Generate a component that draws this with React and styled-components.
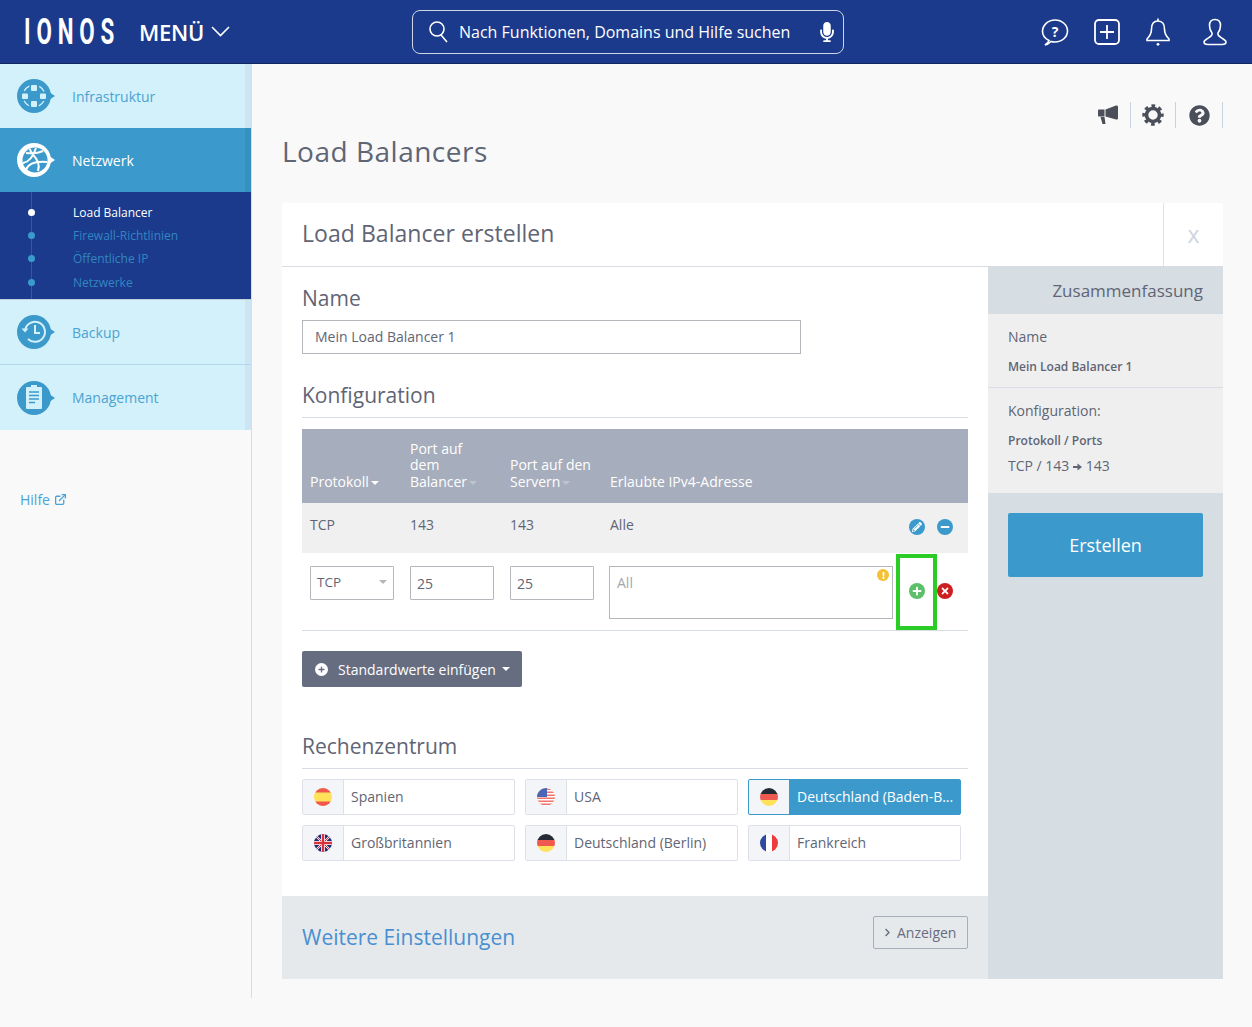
import styled, { createGlobalStyle, css } from 'styled-components'
import { FaQuestionCircle, FaPencilAlt, FaMinus, FaPlus, FaTimes, FaExclamation, FaMicrophone, FaChevronRight } from 'react-icons/fa'
import { FiExternalLink } from 'react-icons/fi'

const GlobalStyle = createGlobalStyle`
  * { box-sizing: border-box; }
  html, body { margin: 0; padding: 0; background: #f9f9f9; }
  body { font-family: "Open Sans", "Liberation Sans", sans-serif; font-size: 14px; color: #5f6575; }
`

const SummaryArrow = () => (
  <svg width="9" height="8" viewBox="0 0 10 8"><path d="M0 3h5V0l5 4-5 4V5H0z" fill="#5f6575" /></svg>
)

const Caret = styled.span`
  display: inline-block;
  margin-left: ${p => p.$gap ?? 3}px;
  vertical-align: middle;
  border-left: 4px solid transparent;
  border-right: 4px solid transparent;
  border-top: 4px solid ${p => p.$color || '#fff'};
`

/* ---------- icons ---------- */

const NavIcon = ({ active, children }) => {
  const bg = active ? '#fff' : '#3b9acb'
  return (
    <svg width="38" height="36" viewBox="0 0 38 36">
      <circle cx="17" cy="18" r="17" fill={bg} />
      <path d="M32 14l6 4-6 4z" fill={bg} />
      {children}
    </svg>
  )
}

const InfraGlyph = () => (
  <g fill="#d3f1fa">
    <circle cx="17" cy="18" r="11" fill="none" stroke="#d3f1fa" strokeWidth="1.3" strokeDasharray="7 10.28" strokeDashoffset="-5.14" />
    <rect x="14" y="7" width="6" height="6" rx="1" />
    <rect x="14" y="23" width="6" height="6" rx="1" />
    <rect x="5" y="15.500" width="6" height="5.500" rx="1" />
    <rect x="23" y="15.500" width="6" height="5.500" rx="1" />
  </g>
)

const GlobeGlyph = () => (
  <g>
    <circle cx="18" cy="18" r="12.500" fill="#3b9acb" />
    <g fill="none" stroke="#fff" strokeWidth="2">
      <path d="M6 21c6-1 10-6 13-15M9 28c2-6 8-9 21-8M13 7c0 4 5 6 8 13 1 3 1 6 0 9M26 9c-4 2-9 3-17 2" />
    </g>
  </g>
)

const ClockGlyph = () => (
  <g fill="none" stroke="#d3f1fa" strokeWidth="2">
    <path d="M8 17a10 10 0 1 1 3 8" />
    <path d="M4.500 14.500l3.500 4 3.500-4z" fill="#d3f1fa" stroke="none" />
    <path d="M18 11v8h5" />
  </g>
)

const ClipboardGlyph = () => (
  <g>
    <rect x="9" y="7" width="16" height="22" rx="1" fill="#d3f1fa" />
    <rect x="14" y="5" width="6" height="3" fill="#d3f1fa" />
    <path d="M12 12h10M12 15.500h10M12 19h10M12 22.500h6" stroke="#3b9acb" strokeWidth="1.400" />
  </g>
)

const SearchIcon = () => (
  <svg width="22" height="24" viewBox="0 0 22 24" fill="none" stroke="#fff" strokeWidth="1.600">
    <circle cx="9" cy="9" r="7" />
    <path d="M13 15l6 7" />
  </svg>
)

const ChatIcon = () => (
  <svg width="28" height="28" viewBox="0 0 28 28" fill="none" stroke="#fff" strokeWidth="1.600">
    <path d="M8 22.500C4 20.500 1.500 17.500 1.500 13.500 1.500 7 7 2 14 2S26.500 7 26.500 13 21 24 14 24c-1.500 0-2.500 0-4-.5-1 1-3 3-6 3.500 2-1.500 3.500-3 4-4.500z" />
    <text x="14" y="18.500" textAnchor="middle" fontSize="14" fontWeight="700" fill="#fff" stroke="none" fontFamily="Open Sans">?</text>
  </svg>
)

const PlusBoxIcon = () => (
  <svg width="26" height="26" viewBox="0 0 26 26" fill="none" stroke="#fff" strokeWidth="1.800">
    <rect x="1" y="1" width="24" height="24" rx="4" />
    <path d="M13 6v14M6 13h14" />
  </svg>
)

const BellIcon = () => (
  <svg width="26" height="28" viewBox="0 0 26 28" fill="none" stroke="#fff" strokeWidth="1.600">
    <path d="M13 3c-4.500 0-6.500 3.500-6.500 8 0 5-2 7.500-4.500 10v1.500h22V21c-2.500-2.500-4.500-5-4.500-10 0-4.500-2-8-6.500-8z" />
    <path d="M13 .5v2.500" />
    <circle cx="13" cy="26.300" r="1.400" fill="#fff" stroke="none" />
  </svg>
)

const UserIcon = () => (
  <svg width="24" height="28" viewBox="0 0 24 28" fill="none" stroke="#fff" strokeWidth="1.600">
    <path d="M12 1.500c-3.500 0-5.500 2.500-5.500 6 0 3 1 5.500 2.500 7.500 1 2.500-1.500 3.500-4.500 5.500-2.500 1.500-3.500 2.500-3.500 3.500 0 1.500 1.500 2.500 4 2.500h14c2.500 0 4-1 4-2.500 0-1-1-2-3.500-3.500-3-2-5.500-3-4.500-5.500 1.500-2 2.500-4.500 2.500-7.500 0-3.500-2-6-5.500-6z" />
  </svg>
)

const MegaphoneIcon = () => (
  <svg width="20" height="20" viewBox="0 0 20 20" fill="#4a4f5a">
    <path d="M0 5.500c0-.5.500-1 1-1h5.500v7H1c-.5 0-1-.5-1-1z" />
    <path d="M7.500 4.500L18 .5c1-.3 2 .3 2 1.300v11.400c0 1-1 1.600-2 1.300L7.500 11.500z" />
    <path d="M2.500 12h4l1 7H4.500z" />
  </svg>
)

const GearIcon = () => (
  <svg width="22" height="22" viewBox="0 0 22 22" fill="none" stroke="#4a4f5a">
    <circle cx="11" cy="11" r="6.500" strokeWidth="3.600" />
    <circle cx="11" cy="11" r="9" strokeWidth="3.400" strokeDasharray="3.600 3.469" strokeDashoffset="1.800" />
  </svg>
)

const Flag = ({ children }) => (
  <svg width="18" height="18" viewBox="0 0 18 18">
    <defs>
      <clipPath id="flag-circle"><circle cx="9" cy="9" r="9" /></clipPath>
    </defs>
    <g clipPath="url(#flag-circle)">{children}</g>
  </svg>
)

const Spain = () => (
  <Flag>
    <rect width="18" height="18" fill="#ffe15a" />
    <rect width="18" height="4.500" fill="#f0584f" />
    <rect y="13.500" width="18" height="4.500" fill="#f0584f" />
  </Flag>
)

const Germany = () => (
  <Flag>
    <rect width="18" height="6" fill="#252b36" />
    <rect y="6" width="18" height="6" fill="#ee5a50" />
    <rect y="12" width="18" height="6" fill="#ffe15a" />
  </Flag>
)

const France = () => (
  <Flag>
    <rect width="6" height="18" fill="#2e4a9e" />
    <rect x="6" width="6" height="18" fill="#fff" />
    <rect x="12" width="6" height="18" fill="#ee3b3b" />
  </Flag>
)

const Usa = () => (
  <Flag>
    <rect width="18" height="18" fill="#fff" />
    {[0, 3, 6, 9, 12, 15].map(y => <rect key={y} y={y + 0.5} width="18" height="1.500" fill="#f0736c" />)}
    <rect width="10" height="9" fill="#4a66b5" />
  </Flag>
)

const Britain = () => (
  <Flag>
    <rect width="18" height="18" fill="#1f2f78" />
    <path d="M0 0l18 18M18 0L0 18" stroke="#fff" strokeWidth="2" />
    <path d="M0 0l18 18M18 0L0 18" stroke="#d8303c" strokeWidth="1" />
    <path d="M9 0v18M0 9h18" stroke="#fff" strokeWidth="4" />
    <path d="M9 0v18M0 9h18" stroke="#d8303c" strokeWidth="2.500" />
  </Flag>
)

/* ---------- header ---------- */

const Header = styled.header`
  height: 64px;
  background: #1b3a8c;
  border-bottom: 1px solid #12275f;
  display: flex;
  align-items: center;
  color: #fff;
  padding-left: 24px;
  padding-right: 25px;
`

const Logo = styled.div`
  width: 91px;
  font-family: "Roboto", sans-serif;
  font-size: 36px;
  font-weight: 700;
  line-height: 1;
  letter-spacing: 9.500px;
  white-space: nowrap;
  transform: scaleX(0.62);
  transform-origin: left center;
`

const Menu = styled.div`
  margin-left: 24px;
  width: 91px;
  display: flex;
  align-items: center;
  gap: 7px;
  font-size: 22px;
  font-weight: 600;
  letter-spacing: -0.3px;
`

const SearchBox = styled.div`
  margin-left: 182px;
  width: 432px;
  height: 44px;
  border: 1px solid #cfd6e6;
  border-radius: 8px;
  display: flex;
  align-items: center;
  padding: 0 6px 0 15px;
  gap: 9px;
  font-size: 16px;
  span { flex: 1; white-space: nowrap; }
`

const HeaderIcons = styled.div`
  margin-left: auto;
  display: flex;
  align-items: center;
  gap: 25px;
  & > :last-child { margin-left: 7px; }
`

/* ---------- sidebar ---------- */

const Layout = styled.div`
  display: flex;
  align-items: flex-start;
  min-height: 963px;
`

const Sidebar = styled.aside`
  width: 252px;
  flex: none;
  height: 934px;
  border-right: 1px solid #d8dde3;
`

const NavItem = styled.div`
  position: relative;
  height: ${p => p.$height || 64}px;
  display: flex;
  align-items: center;
  gap: 17px;
  padding-left: 17px;
  font-size: 14px;
  background: ${p => (p.$active ? '#3b9acb' : '#d3f1fa')};
  color: ${p => (p.$active ? '#fff' : '#4ba3d3')};
  box-shadow: inset -6px 0 0 ${p => (p.$active ? '#3690c0' : '#cde4f2')};
  ${p => p.$line && css`border-top: 1px solid #b5d6ec;`}
  ${p => p.$active && css`
    &::after {
      content: '';
      position: absolute;
      left: 24px;
      bottom: -7px;
      border-left: 7px solid transparent;
      border-right: 7px solid transparent;
      border-top: 7px solid #3b9acb;
    }
  `}
`

const SubNav = styled.div`
  position: relative;
  height: 108px;
  background: #1b3a8c;
  padding-top: 9px;
  border-bottom: 1px solid #c4cfdc;
  &::before {
    content: '';
    position: absolute;
    left: 31px;
    top: 0;
    bottom: 0;
    width: 1px;
    background: #2b5da5;
  }
`

const SubItem = styled.div`
  position: relative;
  height: 23.200px;
  line-height: 23px;
  padding-left: 73px;
  font-size: 12px;
  color: ${p => (p.$active ? '#fff' : '#3286c0')};
  &::before {
    content: '';
    position: absolute;
    left: 28px;
    top: 8px;
    width: 7px;
    height: 7px;
    border-radius: 50%;
    background: ${p => (p.$active ? '#fff' : '#3b9acb')};
  }
`

const HelpLink = styled.div`
  margin: 60px 0 0 20px;
  display: flex;
  align-items: center;
  gap: 4px;
  font-size: 14px;
  color: #4ba3d3;
`

/* ---------- main ---------- */

const Main = styled.main`
  flex: 1;
  padding: 38px 29px 0 30px;
`

const ToolRow = styled.div`
  display: flex;
  justify-content: flex-end;
  height: 26px;
  color: #4a4f5a;
`

const ToolCell = styled.div`
  width: ${p => p.$w || 45}px;
  display: flex;
  align-items: center;
  justify-content: center;
  border-right: 1px solid #c9d2de;
  font-size: 21px;
`

const PageTitle = styled.h1`
  margin: 0;
  height: 75px;
  padding-top: 4px;
  font-size: 28px;
  line-height: 38px;
  font-weight: 400;
  letter-spacing: 0.5px;
  color: #5f6575;
`

const Panel = styled.section`
  background: #fff;
  border-radius: 3px 3px 0 0;
`

const PanelHead = styled.div`
  height: 64px;
  display: flex;
  border-bottom: 1px solid #d8dde3;
`

const PanelTitle = styled.h2`
  flex: 1;
  margin: 0;
  padding-left: 20px;
  font-size: 23px;
  line-height: 61px;
  font-weight: 400;
  letter-spacing: 0.05px;
  color: #5f6575;
`

const CloseCell = styled.div`
  width: 60px;
  border-left: 1px solid #dfe3e8;
  text-align: center;
  line-height: 63px;
  font-size: 23px;
  color: #cfd5de;
`

const PanelBody = styled.div`
  display: flex;
`

const FormColumn = styled.div`
  width: 706px;
  background: #fff;
`

const FormInner = styled.div`
  padding: 16px 20px 35px;
`

const SectionLabel = styled.h3`
  margin: 0;
  font-size: 21px;
  line-height: 30px;
  font-weight: 400;
  color: #5f6575;
`

const RuledLabel = styled(SectionLabel)`
  margin-top: ${p => p.$top}px;
  padding-bottom: 7px;
  border-bottom: 1px solid #d8dde3;
`

const TextField = styled.div`
  margin-top: 7px;
  width: 499px;
  height: 34px;
  border: 1px solid #b3b6bb;
  padding: 0 12px;
  line-height: 32px;
  font-size: 14px;
`

const RuleTable = styled.table`
  position: relative;
  width: 666px;
  margin-top: 11px;
  border-collapse: collapse;
  table-layout: fixed;
`

const HeadCell = styled.th`
  width: ${p => p.$w}px;
  height: 74px;
  padding: 0 8px 13px;
  background: #a6adbc;
  vertical-align: bottom;
  text-align: left;
  font-weight: 400;
  font-size: 14px;
  line-height: 16.500px;
  color: #fff;
`

const DataCell = styled.td`
  height: 50px;
  padding: 0 8px 7px;
  background: #f0f0f0;
  font-size: 14px;
`

const EditCell = styled.td`
  height: 76px;
  padding: 13px 8px 11px;
  vertical-align: top;
  border-bottom: 1px solid #d8dde3;
`

const IconCell = styled.td`
  background: ${p => (p.$edit ? '#fff' : '#f0f0f0')};
  ${p => p.$edit && css`border-bottom: 1px solid #d8dde3;`}
  padding: 0 0 ${p => (p.$edit ? '1px' : '2px')} 14px;
`

const IconPair = styled.div`
  display: flex;
  gap: 12px;
`

const RoundIcon = styled.span`
  width: 16px;
  height: 16px;
  border-radius: 50%;
  display: inline-flex;
  align-items: center;
  justify-content: center;
  background: ${p => p.$color};
  color: #fff;
  font-size: 10px;
`

const SelectBox = styled.div`
  width: 84px;
  height: 34px;
  border: 1px solid #b3b6bb;
  border-radius: 1px;
  display: flex;
  align-items: center;
  justify-content: space-between;
  padding: 0 6px 2px 6px;
  font-size: 13.500px;
`

const SmallInput = styled.div`
  width: 84px;
  height: 34px;
  border: 1px solid #b3b6bb;
  border-radius: 1px;
  padding-left: 6px;
  line-height: 33px;
  font-size: 14px;
`

const AddressInput = styled.div`
  position: relative;
  width: 284px;
  height: 53px;
  margin-left: -1px;
  border: 1px solid #b3b6bb;
  padding: 6px 7px;
  line-height: 19px;
  font-size: 14px;
  color: #a3a7ae;
`

const WarnBadge = styled(RoundIcon)`
  position: absolute;
  top: 2px;
  right: 3px;
  width: 12px;
  height: 12px;
  font-size: 7px;
`

const Highlight = styled.div`
  position: absolute;
  left: 594px;
  bottom: 1px;
  width: 41px;
  height: 76px;
  border: 4px solid #2ccc26;
  pointer-events: none;
`

const GhostButton = styled.div`
  margin-top: 20px;
  width: 220px;
  height: 36px;
  background: #666d80;
  border-radius: 2px;
  color: #fff;
  display: flex;
  align-items: center;
  padding-left: 13px;
  font-size: 14px;
  gap: 10px;
`

const DotPlus = styled.span`
  width: 13px;
  height: 13px;
  border-radius: 50%;
  background: #fff;
  color: #666d80;
  font-size: 7px;
  display: inline-flex;
  align-items: center;
  justify-content: center;
`

const RegionGrid = styled.div`
  margin-top: 10px;
  width: 659px;
  display: grid;
  grid-template-columns: repeat(3, 213px);
  grid-auto-rows: 36px;
  gap: 10px;
`

const RegionCard = styled.div`
  display: flex;
  border: 1px solid ${p => (p.$active ? '#3b9acb' : '#dde1e7')};
  border-radius: 2px;
  background: ${p => (p.$active ? '#3b9acb' : '#fff')};
  color: ${p => (p.$active ? '#fff' : '#5f6575')};
  font-size: 14px;
  overflow: hidden;
`

const RegionFlag = styled.div`
  width: 41px;
  flex: none;
  background: #f4f5f8;
  border-right: 1px solid ${p => (p.$active ? '#3b9acb' : '#dde1e7')};
  display: flex;
  align-items: center;
  justify-content: center;
`

const RegionName = styled.div`
  flex: 1;
  min-width: 0;
  padding-left: 7px;
  line-height: 34px;
  white-space: nowrap;
`

const MoreBar = styled.div`
  height: 83px;
  background: #e6e9ec;
  display: flex;
  justify-content: space-between;
  padding: 20px 20px 0;
`

const MoreTitle = styled.div`
  padding-top: 4px;
  font-size: 21px;
  line-height: 34px;
  color: #4a90d0;
`

const OutlineButton = styled.div`
  width: 95px;
  height: 33px;
  border: 1px solid #a6adbc;
  border-radius: 2px;
  display: flex;
  align-items: center;
  gap: 5px;
  padding-left: 9px;
  font-size: 14px;
  color: #666d80;
`

/* ---------- summary column ---------- */

const SummaryColumn = styled.aside`
  width: 235px;
  background: #d6dde3;
`

const SummaryTitle = styled.div`
  height: 47px;
  padding-right: 20px;
  text-align: right;
  font-size: 17px;
  line-height: 48px;
`

const SummaryGroup = styled.div`
  background: #efefef;
  padding: 12px 20px 0;
  height: ${p => p.$height}px;
  ${p => p.$line && css`border-bottom: 1px solid #d8dde3;`}
`

const SummaryText = styled.div`
  margin-top: ${p => p.$top || 0}px;
  font-size: 14px;
  line-height: 22px;
`

const SummaryStrong = styled.div`
  margin-top: 8px;
  font-size: 12px;
  line-height: 22px;
  font-weight: 600;
`

const SubmitBar = styled.div`
  padding: 20px;
`

const SubmitButton = styled.div`
  height: 64px;
  background: #3b9acb;
  border-radius: 2px;
  color: #fff;
  font-size: 18px;
  line-height: 64px;
  text-align: center;
`

const regions = [
  { name: 'Spanien', flag: <Spain /> },
  { name: 'USA', flag: <Usa /> },
  { name: 'Deutschland (Baden-B...', flag: <Germany />, active: true },
  { name: 'Großbritannien', flag: <Britain /> },
  { name: 'Deutschland (Berlin)', flag: <Germany /> },
  { name: 'Frankreich', flag: <France /> },
]

function App() {
  return (
    <>
      <GlobalStyle />
      <Header>
        <Logo>IONOS</Logo>
        <Menu>
          MENÜ
          <svg width="19" height="11" viewBox="0 0 19 11" fill="none" stroke="#fff" strokeWidth="1.600"><path d="M1 1l8.500 8.500L18 1" /></svg>
        </Menu>
        <SearchBox>
          <SearchIcon />
          <span>Nach Funktionen, Domains und Hilfe suchen</span>
          <FaMicrophone size={20} />
        </SearchBox>
        <HeaderIcons>
          <ChatIcon />
          <PlusBoxIcon />
          <BellIcon />
          <UserIcon />
        </HeaderIcons>
      </Header>
      <Layout>
        <Sidebar>
          <NavItem>
            <NavIcon><InfraGlyph /></NavIcon>
            Infrastruktur
          </NavItem>
          <NavItem $active>
            <NavIcon active><GlobeGlyph /></NavIcon>
            Netzwerk
          </NavItem>
          <SubNav>
            <SubItem $active>Load Balancer</SubItem>
            <SubItem>Firewall-Richtlinien</SubItem>
            <SubItem>Öffentliche IP</SubItem>
            <SubItem>Netzwerke</SubItem>
          </SubNav>
          <NavItem>
            <NavIcon><ClockGlyph /></NavIcon>
            Backup
          </NavItem>
          <NavItem $line $height={66}>
            <NavIcon><ClipboardGlyph /></NavIcon>
            Management
          </NavItem>
          <HelpLink>
            Hilfe
            <FiExternalLink size={13} strokeWidth={2.400} />
          </HelpLink>
        </Sidebar>
        <Main>
          <ToolRow>
            <ToolCell><MegaphoneIcon /></ToolCell>
            <ToolCell><GearIcon /></ToolCell>
            <ToolCell $w={47}><FaQuestionCircle /></ToolCell>
          </ToolRow>
          <PageTitle>Load Balancers</PageTitle>
          <Panel>
            <PanelHead>
              <PanelTitle>Load Balancer erstellen</PanelTitle>
              <CloseCell>x</CloseCell>
            </PanelHead>
            <PanelBody>
              <FormColumn>
                <FormInner>
                  <SectionLabel>Name</SectionLabel>
                  <TextField>Mein Load Balancer 1</TextField>
                  <RuledLabel $top={26}>Konfiguration</RuledLabel>
                  <RuleTable>
                    <thead>
                      <tr>
                        <HeadCell $w={100}>Protokoll<Caret $gap={2} /></HeadCell>
                        <HeadCell $w={100}>Port auf dem Balancer<Caret $gap={2} $color="#bfc4cf" /></HeadCell>
                        <HeadCell $w={100}>Port auf den Servern<Caret $gap={2} $color="#bfc4cf" /></HeadCell>
                        <HeadCell $w={293}>Erlaubte IPv4-Adresse</HeadCell>
                        <HeadCell $w={73} />
                      </tr>
                    </thead>
                    <tbody>
                      <tr>
                        <DataCell>TCP</DataCell>
                        <DataCell>143</DataCell>
                        <DataCell>143</DataCell>
                        <DataCell>Alle</DataCell>
                        <IconCell>
                          <IconPair>
                            <RoundIcon $color="#3b9acb"><FaPencilAlt /></RoundIcon>
                            <RoundIcon $color="#3b9acb"><FaMinus /></RoundIcon>
                          </IconPair>
                        </IconCell>
                      </tr>
                      <tr>
                        <EditCell>
                          <SelectBox>TCP<Caret $color="#b3b6bb" /></SelectBox>
                        </EditCell>
                        <EditCell><SmallInput>25</SmallInput></EditCell>
                        <EditCell><SmallInput>25</SmallInput></EditCell>
                        <EditCell>
                          <AddressInput>
                            All
                            <WarnBadge $color="#f5c033"><FaExclamation /></WarnBadge>
                          </AddressInput>
                        </EditCell>
                        <IconCell $edit>
                          <IconPair>
                            <RoundIcon $color="#5cc06a"><FaPlus /></RoundIcon>
                            <RoundIcon $color="#cc1f1f"><FaTimes /></RoundIcon>
                          </IconPair>
                        </IconCell>
                      </tr>
                    </tbody>
                    <Highlight as="caption" />
                  </RuleTable>
                  <GhostButton>
                    <DotPlus><FaPlus /></DotPlus>
                    Standardwerte einfügen
                    <Caret $gap={-4} />
                  </GhostButton>
                  <RuledLabel $top={44}>Rechenzentrum</RuledLabel>
                  <RegionGrid>
                    {regions.map(r => (
                      <RegionCard key={r.name} $active={r.active}>
                        <RegionFlag $active={r.active}>{r.flag}</RegionFlag>
                        <RegionName>{r.name}</RegionName>
                      </RegionCard>
                    ))}
                  </RegionGrid>
                </FormInner>
                <MoreBar>
                  <MoreTitle>Weitere Einstellungen</MoreTitle>
                  <OutlineButton><FaChevronRight size={9} />Anzeigen</OutlineButton>
                </MoreBar>
              </FormColumn>
              <SummaryColumn>
                <SummaryTitle>Zusammenfassung</SummaryTitle>
                <SummaryGroup $height={74} $line>
                  <SummaryText>Name</SummaryText>
                  <SummaryStrong>Mein Load Balancer 1</SummaryStrong>
                </SummaryGroup>
                <SummaryGroup $height={105}>
                  <SummaryText>Konfiguration:</SummaryText>
                  <SummaryStrong>Protokoll / Ports</SummaryStrong>
                  <SummaryText $top={3}>TCP / 143 <SummaryArrow /> 143</SummaryText>
                </SummaryGroup>
                <SubmitBar>
                  <SubmitButton>Erstellen</SubmitButton>
                </SubmitBar>
              </SummaryColumn>
            </PanelBody>
          </Panel>
        </Main>
      </Layout>
    </>
  )
}

export default App
